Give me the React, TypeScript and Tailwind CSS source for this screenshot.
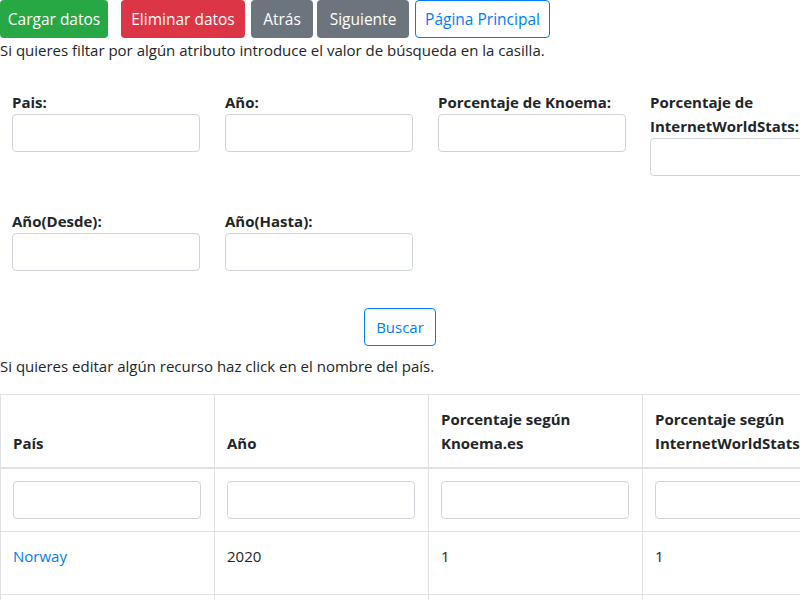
const font = { fontFamily: '"Open Sans", "Noto Sans", sans-serif' };

function Field({ label }: { label: string }) {
  return (
    <div className="pl-3 pr-[13px]">
      <label className="block font-bold leading-6 text-[#212529]">{label}</label>
      <input
        type="text"
        className="block w-[188px] h-[38px] border border-[#ced4da] rounded bg-white px-3"
      />
    </div>
  );
}

const headers = [
  "País",
  "Año",
  "Porcentaje según Knoema.es",
  "Porcentaje según InternetWorldStats.com",
  "Acciones",
];

function App() {
  return (
    <div
      className="w-[800px] h-[600px] overflow-hidden bg-white text-[15px] leading-6 text-[#212529]"
      style={font}
    >
      {/* Buttons */}
      <div className="flex h-[38px] text-[15.5px]">
        <button className="w-[108px] h-[38px] rounded bg-[#28a745] text-white">
          Cargar datos
        </button>
        <button className="ml-[13px] w-[124px] h-[38px] rounded bg-[#dc3545] text-white">
          Eliminar datos
        </button>
        <button className="ml-[6px] w-[62px] h-[38px] rounded bg-[#6c757d] text-white">
          Atrás
        </button>
        <button className="ml-[4px] w-[92px] h-[38px] rounded bg-[#6c757d] text-white">
          Siguiente
        </button>
        <button className="ml-[6px] w-[135px] h-[38px] rounded border border-[#007bff] text-[#007bff]">
          Página Principal
        </button>
      </div>
      <p className="leading-6">
        Si quieres filtar por algún atributo introduce el valor de búsqueda en la casilla.
      </p>

      {/* Filter form */}
      <div className="mt-[28px] flex items-start">
        <div className="w-[213px] shrink-0">
          <Field label="Pais:" />
        </div>
        <div className="w-[213px] shrink-0">
          <Field label="Año:" />
        </div>
        <div className="w-[213px] shrink-0">
          <Field label="Porcentaje de Knoema:" />
        </div>
        <div className="w-[213px] shrink-0">
          <div className="pl-[11px]">
            <label className="block font-bold leading-6 w-[160px]">
              Porcentaje de InternetWorldStats:
            </label>
            <input
              type="text"
              className="block w-[188px] h-[38px] border border-[#ced4da] rounded bg-white"
            />
          </div>
        </div>
      </div>
      <div className="mt-[33px] flex items-start">
        <div className="w-[213px] shrink-0">
          <Field label="Año(Desde):" />
        </div>
        <div className="w-[213px] shrink-0">
          <Field label="Año(Hasta):" />
        </div>
      </div>

      <div className="mt-[37px] flex justify-center">
        <button className="w-[72px] h-[38px] rounded border border-[#007bff] text-[#007bff]">
          Buscar
        </button>
      </div>
      <p className="mt-[8px] leading-6">
        Si quieres editar algún recurso haz click en el nombre del país.
      </p>

      {/* Table */}
      <table className="mt-[16px] table-fixed border-collapse w-[1070px]">
        <thead>
          <tr>
            {headers.map((h) => (
              <th
                key={h}
                className="w-[214px] border border-[#dee2e6] border-b-2 px-3 pt-3 pb-3 align-bottom text-left font-bold leading-6"
              >
                {h}
              </th>
            ))}
          </tr>
        </thead>
        <tbody>
          <tr>
            {headers.map((h) => (
              <td key={h} className="border border-[#dee2e6] p-3">
                <input
                  type="text"
                  className="block w-[188px] h-[38px] border border-[#ced4da] rounded bg-white"
                />
              </td>
            ))}
          </tr>
          <tr className="h-[63px]">
            <td className="border border-[#dee2e6] px-3 pt-3 pb-[15px] align-top">
              <a href="#" className="text-[#007bff]">
                Norway
              </a>
            </td>
            <td className="border border-[#dee2e6] px-3 pt-3 align-top">2020</td>
            <td className="border border-[#dee2e6] px-3 pt-3 align-top">1</td>
            <td className="border border-[#dee2e6] px-3 pt-3 align-top">1</td>
            <td className="border border-[#dee2e6] px-3 pt-3 align-top"></td>
          </tr>
          <tr>
            <td className="border border-[#dee2e6] p-3">&nbsp;</td>
            <td className="border border-[#dee2e6] p-3">&nbsp;</td>
            <td className="border border-[#dee2e6] p-3">&nbsp;</td>
            <td className="border border-[#dee2e6] p-3">&nbsp;</td>
            <td className="border border-[#dee2e6] p-3">&nbsp;</td>
          </tr>
        </tbody>
      </table>
    </div>
  );
}

export default App;
